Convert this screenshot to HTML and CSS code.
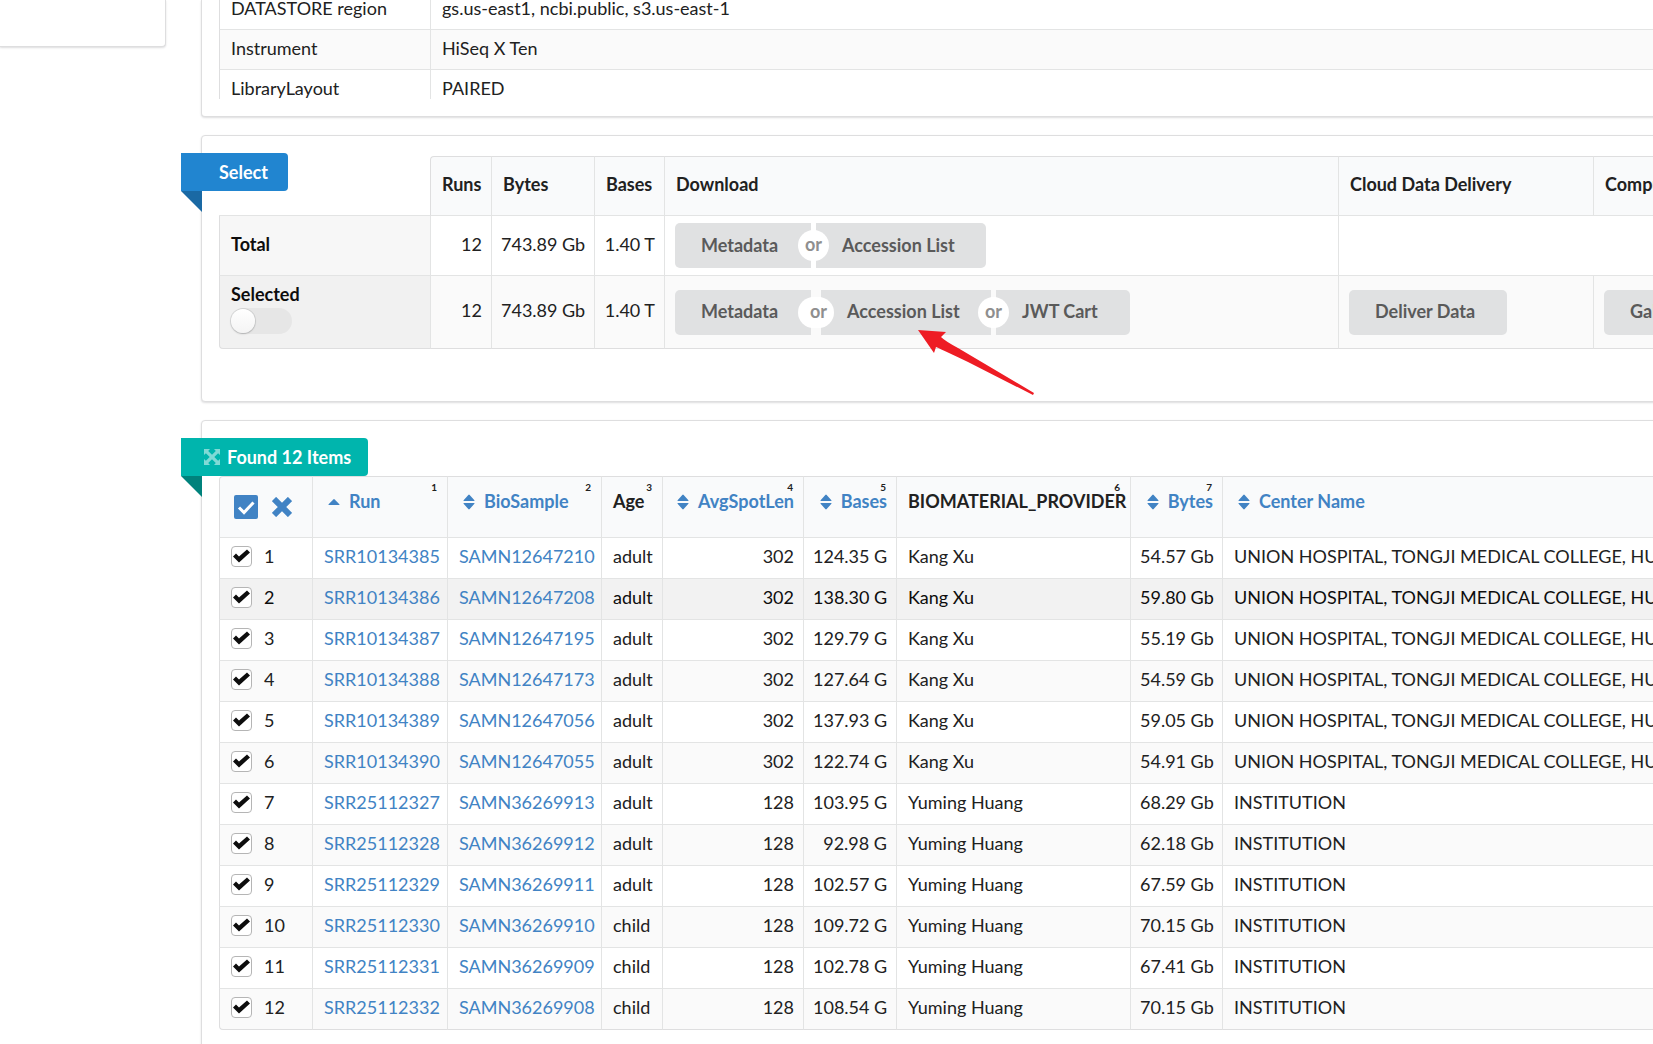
FILE: index.html
```html
<!DOCTYPE html>
<html lang="en">
<head>
<meta charset="utf-8">
<title>SRA Run Selector</title>
<link rel="stylesheet" href="styles.css">
</head>
<body>
<svg class="sprite" aria-hidden="true">
  <symbol id="i-sort" viewBox="0 0 12 16"><path d="M1 7 Q0 7 .6 6.2 L5.3 .9 Q6 .2 6.700 .9 L11.400 6.200 Q12 7 11 7Z M1 9 Q0 9 .6 9.800 L5.300 15.100 Q6 15.800 6.700 15.100 L11.400 9.800 Q12 9 11 9Z"/></symbol>
  <symbol id="i-up" viewBox="0 0 12 16"><path d="M1 11 Q0 11 .6 10.200 L5.300 5.400 Q6 4.700 6.700 5.400 L11.400 10.200 Q12 11 11 11Z"/></symbol>
  <symbol id="i-expand" viewBox="0 0 16 16"><path d="M0 0H6L4.200 1.900 8 5.700 11.800 1.900 10 0H16V6L14.100 4.200 10.300 8 14.100 11.800 16 10V16H10L11.800 14.100 8 10.300 4.200 14.100 6 16H0V10L1.900 11.800 5.700 8 1.900 4.200 0 6Z"/></symbol>
</svg>
<div class="page">
  <aside class="side"><div class="card side-card"></div></aside>
  <main class="main">
    <section class="card common">
      <div class="scroll">
        <table class="grid common-table">
          <colgroup><col class="w-label"><col></colgroup>
          <tbody>
            <tr><td>DATASTORE region</td><td>gs.us-east1, ncbi.public, s3.us-east-1</td></tr>
            <tr><td>Instrument</td><td>HiSeq X Ten</td></tr>
            <tr><td>LibraryLayout</td><td>PAIRED</td></tr>
          </tbody>
        </table>
      </div>
    </section>

    <section class="card select">
      <div class="ribbon blue floating">Select</div>
      <table class="grid select-table">
        <colgroup><col class="w-label"><col class="w-runs"><col class="w-size"><col class="w-base"><col class="w-down"><col class="w-cloud"><col></colgroup>
        <thead>
          <tr><td class="blank"></td><th scope="col">Runs</th><th scope="col">Bytes</th><th scope="col">Bases</th><th scope="col">Download</th><th scope="col">Cloud Data Delivery</th><th scope="col">Computing</th></tr>
        </thead>
        <tbody>
          <tr class="total">
            <th scope="row">Total</th><td class="num">12</td><td class="num">743.89 Gb</td><td class="num">1.40 T</td>
            <td class="action"><div class="buttons"><button class="btn w-meta">Metadata</button><span class="or">or</span><button class="btn w-acc">Accession List</button></div></td>
            <td colspan="2"></td>
          </tr>
          <tr class="selected">
            <th scope="row"><label for="sel">Selected</label><input class="toggle" type="checkbox" id="sel"></th><td class="num">12</td><td class="num">743.89 Gb</td><td class="num">1.40 T</td>
            <td class="action"><div class="buttons"><button class="btn w-meta">Metadata</button><span class="or wide">or</span><button class="btn w-acc">Accession List</button><span class="or">or</span><button class="btn w-jwt">JWT Cart</button></div></td>
            <td class="action"><div class="buttons"><button class="btn w-deliver">Deliver Data</button></div></td>
            <td class="action"><div class="buttons"><button class="btn w-deliver">Galaxy</button></div></td>
          </tr>
        </tbody>
      </table>
      <svg class="arrow" viewBox="0 0 116 65" aria-hidden="true"><path d="M0 0L28 2 23 7Q27 11 40 18L116 63 115 65 50 32Q27 21 18 17L16 23Z"/></svg>
    </section>

    <section class="card found">
      <div class="ribbon teal"><svg class="expand"><use href="#i-expand"/></svg>Found 12 Items</div>
      <table class="grid found-table">
        <colgroup><col class="f-check"><col class="f-run"><col class="f-bio"><col class="f-age"><col class="f-len"><col class="f-bases"><col class="f-prov"><col class="f-bytes"><col></colgroup>
        <thead>
          <tr>
            <th scope="col"><div class="picks">
              <button class="pick" aria-label="Select all"><svg width="24" height="24" viewBox="0 0 24 24"><rect width="24" height="24" rx="2"/><path class="tick" d="M5 12.500L10 17.500 19.500 7.500"/></svg></button>
              <button class="pick" aria-label="Clear all"><svg width="20" height="20" viewBox="0 0 20 20"><path class="cross" d="M2 2L18 18M18 2L2 18"/></svg></button>
            </div></th>
            <th scope="col"><a href="#"><svg class="sort"><use href="#i-up"/></svg>Run</a><span class="idx">1</span></th>
            <th scope="col"><a href="#"><svg class="sort"><use href="#i-sort"/></svg>BioSample</a><span class="idx">2</span></th>
            <th scope="col">Age<span class="idx">3</span></th>
            <th scope="col" class="num"><a href="#"><svg class="sort"><use href="#i-sort"/></svg>AvgSpotLen</a><span class="idx">4</span></th>
            <th scope="col" class="num"><a href="#"><svg class="sort"><use href="#i-sort"/></svg>Bases</a><span class="idx">5</span></th>
            <th scope="col">BIOMATERIAL_PROVIDER<span class="idx">6</span></th>
            <th scope="col" class="num"><a href="#"><svg class="sort"><use href="#i-sort"/></svg>Bytes</a><span class="idx">7</span></th>
            <th scope="col"><a href="#"><svg class="sort"><use href="#i-sort"/></svg>Center Name</a></th>
          </tr>
        </thead>
        <tbody>
          <tr><td><label class="row-pick"><input type="checkbox" checked>1</label></td><td><a href="#">SRR10134385</a></td><td><a href="#">SAMN12647210</a></td><td>adult</td><td class="num">302</td><td class="num">124.35 G</td><td>Kang Xu</td><td class="num">54.57 Gb</td><td>UNION HOSPITAL, TONGJI MEDICAL COLLEGE, HUAZHONG UNIVERSITY</td></tr>
          <tr class="active"><td><label class="row-pick"><input type="checkbox" checked>2</label></td><td><a href="#">SRR10134386</a></td><td><a href="#">SAMN12647208</a></td><td>adult</td><td class="num">302</td><td class="num">138.30 G</td><td>Kang Xu</td><td class="num">59.80 Gb</td><td>UNION HOSPITAL, TONGJI MEDICAL COLLEGE, HUAZHONG UNIVERSITY</td></tr>
          <tr><td><label class="row-pick"><input type="checkbox" checked>3</label></td><td><a href="#">SRR10134387</a></td><td><a href="#">SAMN12647195</a></td><td>adult</td><td class="num">302</td><td class="num">129.79 G</td><td>Kang Xu</td><td class="num">55.19 Gb</td><td>UNION HOSPITAL, TONGJI MEDICAL COLLEGE, HUAZHONG UNIVERSITY</td></tr>
          <tr><td><label class="row-pick"><input type="checkbox" checked>4</label></td><td><a href="#">SRR10134388</a></td><td><a href="#">SAMN12647173</a></td><td>adult</td><td class="num">302</td><td class="num">127.64 G</td><td>Kang Xu</td><td class="num">54.59 Gb</td><td>UNION HOSPITAL, TONGJI MEDICAL COLLEGE, HUAZHONG UNIVERSITY</td></tr>
          <tr><td><label class="row-pick"><input type="checkbox" checked>5</label></td><td><a href="#">SRR10134389</a></td><td><a href="#">SAMN12647056</a></td><td>adult</td><td class="num">302</td><td class="num">137.93 G</td><td>Kang Xu</td><td class="num">59.05 Gb</td><td>UNION HOSPITAL, TONGJI MEDICAL COLLEGE, HUAZHONG UNIVERSITY</td></tr>
          <tr><td><label class="row-pick"><input type="checkbox" checked>6</label></td><td><a href="#">SRR10134390</a></td><td><a href="#">SAMN12647055</a></td><td>adult</td><td class="num">302</td><td class="num">122.74 G</td><td>Kang Xu</td><td class="num">54.91 Gb</td><td>UNION HOSPITAL, TONGJI MEDICAL COLLEGE, HUAZHONG UNIVERSITY</td></tr>
          <tr><td><label class="row-pick"><input type="checkbox" checked>7</label></td><td><a href="#">SRR25112327</a></td><td><a href="#">SAMN36269913</a></td><td>adult</td><td class="num">128</td><td class="num">103.95 G</td><td>Yuming Huang</td><td class="num">68.29 Gb</td><td>INSTITUTION</td></tr>
          <tr><td><label class="row-pick"><input type="checkbox" checked>8</label></td><td><a href="#">SRR25112328</a></td><td><a href="#">SAMN36269912</a></td><td>adult</td><td class="num">128</td><td class="num">92.98 G</td><td>Yuming Huang</td><td class="num">62.18 Gb</td><td>INSTITUTION</td></tr>
          <tr><td><label class="row-pick"><input type="checkbox" checked>9</label></td><td><a href="#">SRR25112329</a></td><td><a href="#">SAMN36269911</a></td><td>adult</td><td class="num">128</td><td class="num">102.57 G</td><td>Yuming Huang</td><td class="num">67.59 Gb</td><td>INSTITUTION</td></tr>
          <tr><td><label class="row-pick"><input type="checkbox" checked>10</label></td><td><a href="#">SRR25112330</a></td><td><a href="#">SAMN36269910</a></td><td>child</td><td class="num">128</td><td class="num">109.72 G</td><td>Yuming Huang</td><td class="num">70.15 Gb</td><td>INSTITUTION</td></tr>
          <tr><td><label class="row-pick"><input type="checkbox" checked>11</label></td><td><a href="#">SRR25112331</a></td><td><a href="#">SAMN36269909</a></td><td>child</td><td class="num">128</td><td class="num">102.78 G</td><td>Yuming Huang</td><td class="num">67.41 Gb</td><td>INSTITUTION</td></tr>
          <tr><td><label class="row-pick"><input type="checkbox" checked>12</label></td><td><a href="#">SRR25112332</a></td><td><a href="#">SAMN36269908</a></td><td>child</td><td class="num">128</td><td class="num">108.54 G</td><td>Yuming Huang</td><td class="num">70.15 Gb</td><td>INSTITUTION</td></tr>
        </tbody>
      </table>
    </section>
  </main>
</div>
</body>
</html>
```
FILE: styles.css
```css
* { box-sizing: border-box; }
html { height: 100%; }
body {
  margin: 0;
  height: 100%;
  overflow: hidden;
  background: #fff;
  color: #212121;
  font: 18px/20px Lato, "Liberation Sans", sans-serif;
}
a { color: #4183c4; text-decoration: none; }
.sprite { display: none; }

.page { display: flex; align-items: flex-start; gap: 35px; }
.side { flex: 0 0 166px; }
.main { flex: 1 0 auto; min-width: 1600px; }

.card {
  position: relative;
  margin-bottom: 18px;
  padding: 17px;
  background: #fff;
  border: 1px solid #dededf;
  border-radius: 4px;
  box-shadow: 0 1px 2px rgba(34, 36, 38, .15);
}
.side-card {
  height: 47px;
  border-top: 0;
  border-left: 0;
  border-radius: 0 0 4px 0;
}

/* Tables */
.grid {
  width: 100%;
  table-layout: fixed;
  border-collapse: separate;
  border-spacing: 0;
}
.grid th, .grid td {
  height: 41px;
  padding: 0 8px 4px 11px;
  border-left: 1px solid #e3e4e4;
  border-bottom: 1px solid #e3e4e4;
  text-align: left;
  vertical-align: middle;
  white-space: nowrap;
}
.grid tr > :first-child { border-left-color: #dededf; }
.grid thead th {
  background: #f9fafb;
  border-top: 1px solid #dededf;
  font-weight: 700;
}
.grid tbody tr:nth-child(even) { background: #fafafa; }
.grid .num { padding-left: 9px; padding-right: 9px; text-align: right; }
.grid tbody tr:last-child > * { border-bottom-color: #dededf; }
.grid tbody tr:last-child > :first-child { border-bottom-left-radius: 4px; }

.w-label { width: 211px; }
.common { padding-top: 0; border-top: 0; border-radius: 0 0 4px 4px; }
.scroll { height: 99px; overflow: hidden; }
.common-table { margin-top: -10px; }
.common-table td { height: 40px; }

/* Selection summary */
.select { padding-top: 20px; padding-bottom: 52px; }
.w-runs { width: 61px; }
.w-size { width: 103px; }
.w-base { width: 70px; }
.w-down { width: 674px; }
.w-cloud { width: 255px; }
.select-table thead > tr > *, .select-table .total > * { height: 60px; }
.select-table .selected > * { height: 73px; }
.select-table .blank { border-left: 0; }
.select-table thead th:nth-child(2) { border-top-left-radius: 4px; border-left-color: #dededf; }
.select-table tbody th { color: #0d0d0d; font-weight: 700; background: #f7f7f7; }
.select-table .selected th { padding-bottom: 6px; background: #f1f1f1; }
.select-table .selected label { display: block; margin-bottom: 4px; }
.select-table .action { padding: 0 10px; }

.toggle {
  appearance: none;
  display: block;
  width: 61px;
  height: 26px;
  margin: 0;
  padding: 1px 0;
  border-radius: 13px;
  background: #e6e6e6;
}
.toggle::before {
  content: "";
  display: block;
  width: 24px;
  height: 24px;
  border-radius: 50%;
  background: linear-gradient(#fff, #f4f4f4);
  box-shadow: 0 1px 2px rgba(34, 36, 38, .2), 0 0 0 1px rgba(34, 36, 38, .1);
}

.buttons { display: flex; align-items: center; }
.btn {
  height: 45px;
  padding: 0 0 2px 26px;
  border: 0;
  border-radius: 5px;
  background: #e0e1e2;
  color: #5a5a5a;
  font: inherit;
  font-weight: 700;
  text-align: left;
  white-space: nowrap;
}
.buttons .btn:not(:last-child) { border-top-right-radius: 0; border-bottom-right-radius: 0; }
.buttons .btn:not(:first-child) { border-top-left-radius: 0; border-bottom-left-radius: 0; }
.w-meta { width: 136px; }
.w-acc { width: 170px; }
.w-jwt { width: 134px; }
.w-deliver { width: 158px; }
.or {
  flex: none;
  z-index: 1;
  width: 31px;
  height: 31px;
  margin: 0 -13px;
  border-radius: 16px;
  background: #fff;
  color: #8f8f8f;
  font-weight: 700;
  line-height: 29px;
  text-align: center;
}
.or.wide { width: 36px; padding-left: 5px; }

.arrow {
  position: absolute;
  left: 716px;
  top: 194px;
  width: 116px;
  height: 65px;
  fill: #ee1c24;
  z-index: 2;
}

/* Ribbons */
.ribbon {
  position: relative;
  display: flex;
  align-items: center;
  width: fit-content;
  height: 38px;
  margin-left: -38px;
  padding: 0 20px 0 38px;
  border-radius: 0 4px 4px 0;
  color: #fff;
  font-weight: 700;
}
.ribbon::after {
  content: "";
  position: absolute;
  left: 0;
  top: 100%;
  border-style: solid;
  border-width: 0 21px 21px 0;
  border-color: transparent;
}
.ribbon.floating { position: absolute; left: 17px; top: 17px; }
.blue { background: #2185d0; }
.blue::after { border-right-color: #1a69a4; }
.teal { padding-left: 23px; padding-right: 17px; background: #00b5ad; }
.teal::after { border-right-color: #00827c; }
.expand { width: 16px; height: 16px; margin-right: 7px; fill: #fff; opacity: .5; }

/* Runs */
.found { padding-bottom: 60px; }
.f-check { width: 93px; }
.f-run { width: 135px; }
.f-bio { width: 154px; }
.f-age { width: 61px; }
.f-len { width: 141px; }
.f-bases { width: 93px; }
.f-prov { width: 234px; }
.f-bytes { width: 92px; }
.found-table thead th { position: relative; height: 62px; padding-bottom: 12px; }
.found-table thead th:first-child { padding-bottom: 0; border-top-left-radius: 4px; }
.found-table .active { background: #f2f2f2; color: #0d0d0d; }
.found-table tbody tr.active > td { background: #f2f2f2; }
.idx {
  position: absolute;
  right: 10px;
  top: 4px;
  font-size: 10px;
  line-height: 12px;
}
.sort { width: 12px; height: 16px; margin: 0 9px 0 4px; fill: #4183c4; vertical-align: -2px; }
.picks { display: flex; align-items: center; gap: 14px; padding-left: 3px; }
.pick { display: flex; padding: 0; border: 0; background: none; fill: #4183c4; }
.tick { fill: none; stroke: #fff; stroke-width: 3; }
.cross { fill: none; stroke: #4183c4; stroke-width: 6; }
.row-pick { display: flex; align-items: center; gap: 12px; }
.row-pick input {
  appearance: none;
  width: 21px;
  height: 21px;
  margin: 0;
  border: 1px solid #b5b5b5;
  border-radius: 4px;
  background: #fff;
}
.row-pick input:checked::before {
  content: "";
  display: block;
  width: 19px;
  height: 19px;
  background: #0d0d0d;
  clip-path: polygon(1px 10px, 4px 7px, 7px 10px, 15px 3px, 18px 6px, 7px 16px);
}
```
